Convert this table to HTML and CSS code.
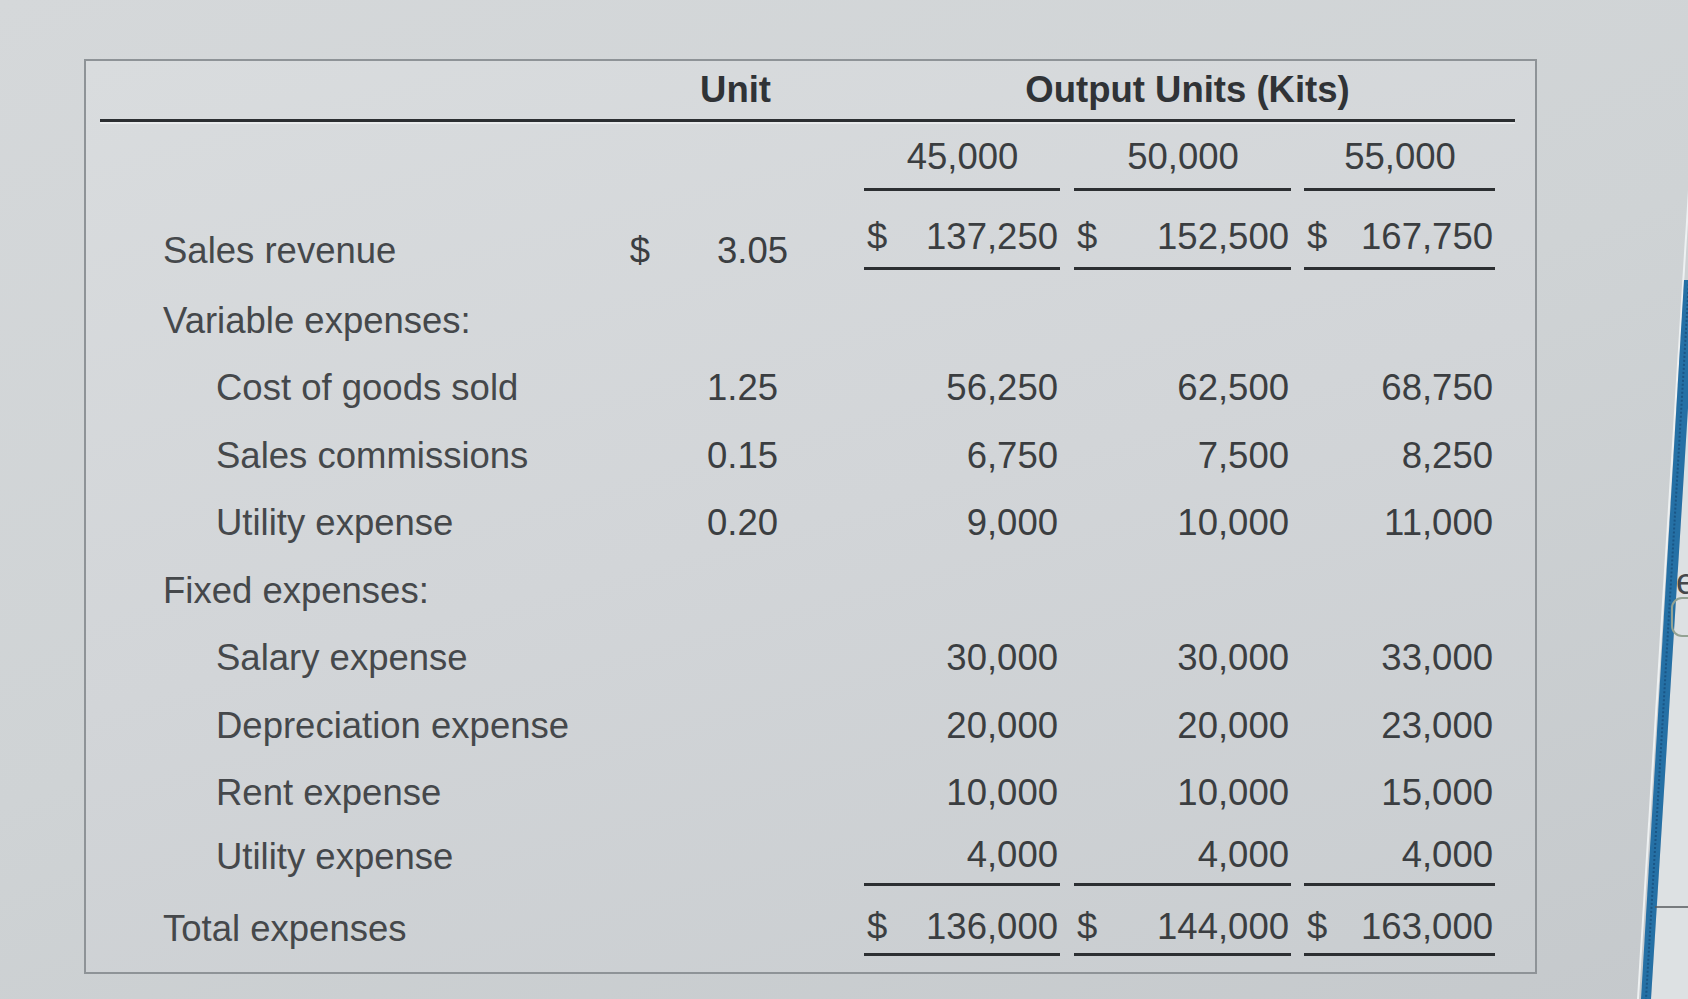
FILE: index.html
```html
<!DOCTYPE html>
<html lang="en">
<head>
<meta charset="utf-8">
<title>Flexible budget</title>
<link rel="stylesheet" href="styles.css">
</head>
<body>
  <section class="card">
    <div class="row head1">
      <div class="lbl"></div>
      <div class="uhead">Unit</div>
      <div class="ohead">Output Units (Kits)</div>
    </div>
    <div class="rule"></div>
    <div class="row head2">
      <div class="lbl"></div>
      <div class="cur"></div>
      <div class="unit"></div>
      <div class="val ul center">45,000</div>
      <div class="val v2 ul center">50,000</div>
      <div class="val v3 ul center">55,000</div>
    </div>
    <div class="row sales">
      <div class="lbl">Sales revenue</div>
      <div class="cur">$</div>
      <div class="unit first">3.05</div>
      <div class="val ul"><span>$</span><span class="num">137,250</span></div>
      <div class="val v2 ul"><span>$</span><span class="num">152,500</span></div>
      <div class="val v3 ul"><span>$</span><span class="num">167,750</span></div>
    </div>
    <div class="row">
      <div class="lbl">Variable expenses:</div>
    </div>
    <div class="row">
      <div class="lbl sub">Cost of goods sold</div>
      <div class="cur"></div>
      <div class="unit">1.25</div>
      <div class="val"><span class="num">56,250</span></div>
      <div class="val v2"><span class="num">62,500</span></div>
      <div class="val v3"><span class="num">68,750</span></div>
    </div>
    <div class="row">
      <div class="lbl sub">Sales commissions</div>
      <div class="cur"></div>
      <div class="unit">0.15</div>
      <div class="val"><span class="num">6,750</span></div>
      <div class="val v2"><span class="num">7,500</span></div>
      <div class="val v3"><span class="num">8,250</span></div>
    </div>
    <div class="row">
      <div class="lbl sub">Utility expense</div>
      <div class="cur"></div>
      <div class="unit">0.20</div>
      <div class="val"><span class="num">9,000</span></div>
      <div class="val v2"><span class="num">10,000</span></div>
      <div class="val v3"><span class="num">11,000</span></div>
    </div>
    <div class="row">
      <div class="lbl">Fixed expenses:</div>
    </div>
    <div class="row">
      <div class="lbl sub">Salary expense</div>
      <div class="cur"></div>
      <div class="unit"></div>
      <div class="val"><span class="num">30,000</span></div>
      <div class="val v2"><span class="num">30,000</span></div>
      <div class="val v3"><span class="num">33,000</span></div>
    </div>
    <div class="row">
      <div class="lbl sub">Depreciation expense</div>
      <div class="cur"></div>
      <div class="unit"></div>
      <div class="val"><span class="num">20,000</span></div>
      <div class="val v2"><span class="num">20,000</span></div>
      <div class="val v3"><span class="num">23,000</span></div>
    </div>
    <div class="row">
      <div class="lbl sub">Rent expense</div>
      <div class="cur"></div>
      <div class="unit"></div>
      <div class="val"><span class="num">10,000</span></div>
      <div class="val v2"><span class="num">10,000</span></div>
      <div class="val v3"><span class="num">15,000</span></div>
    </div>
    <div class="row last">
      <div class="lbl sub">Utility expense</div>
      <div class="cur"></div>
      <div class="unit"></div>
      <div class="val ul"><span class="num">4,000</span></div>
      <div class="val v2 ul"><span class="num">4,000</span></div>
      <div class="val v3 ul"><span class="num">4,000</span></div>
    </div>
    <div class="row total">
      <div class="lbl">Total expenses</div>
      <div class="cur"></div>
      <div class="unit"></div>
      <div class="val ul"><span>$</span><span class="num">136,000</span></div>
      <div class="val v2 ul"><span>$</span><span class="num">144,000</span></div>
      <div class="val v3 ul"><span>$</span><span class="num">163,000</span></div>
    </div>
  </section>

  <svg class="side" width="100" height="999" viewBox="0 0 100 999" aria-hidden="true">
    <polygon points="108,280 140,280 140,999 63,999" fill="#dde1e3"/>
    <line x1="101" y1="190" x2="50" y2="999" stroke="#eef1f2" stroke-width="2"/>
    <polygon points="96,280 108,280 63,999 53,999" fill="#2570a5"/>
    <line x1="101" y1="280" x2="58" y2="999" stroke="#1a5686" stroke-width="2" stroke-dasharray="2 2"/>
    <text x="88" y="594" class="side-e">e</text>
    <rect x="84" y="598" width="40" height="38" rx="10" fill="none" stroke="#93a293" stroke-width="2"/>
    <line x1="67" y1="907" x2="100" y2="907" stroke="#55595c" stroke-width="1.5"/>
  </svg>
</body>
</html>
```

FILE: styles.css
```css
html, body {
  margin: 0;
  padding: 0;
}

body {
  position: relative;
  width: 1688px;
  height: 999px;
  overflow: hidden;
  background: linear-gradient(160deg, #d5d8da 0%, #cfd3d5 50%, #c5c9cc 100%);
  font-family: "Liberation Sans", Arial, sans-serif;
  color: #3b3e41;
}

.card {
  box-sizing: border-box;
  width: 1453px;
  margin: 59px 0 0 84px;
  padding-bottom: 16px;
  border: 2px solid #8e9397;
  background: linear-gradient(165deg, #d9dcde 0%, #d2d5d8 50%, #c9cdd0 100%);
}

.row {
  display: flex;
  height: 67.5px;
  font-size: 36.5px;
  line-height: 1.15;
}

.row > div {
  display: flex;
  align-items: center;
  box-sizing: border-box;
}

.lbl {
  width: 534px;
  padding-left: 77px;
  color: #45484b;
}

.lbl.sub {
  padding-left: 130px;
}

.cur {
  width: 40px;
  justify-content: center;
}

.unit {
  width: 128px;
  justify-content: flex-end;
  padding-right: 10px;
}

.unit.first {
  padding-right: 0;
}

.val {
  width: 196px;
  margin-left: 76px;
  padding: 0 2px 0 3px;
}

.val.v2 {
  width: 217px;
  margin-left: 14px;
}

.val.v3 {
  width: 191px;
  margin-left: 13px;
}

.val .num {
  margin-left: auto;
}

.val.center {
  justify-content: center;
}

.val.ul {
  border-bottom: 3px solid #2c2f32;
}

/* header rows */
.head1 {
  height: 58px;
  font-weight: bold;
  color: #303336;
}

.uhead {
  width: 168px;
  justify-content: flex-end;
  padding-right: 17px;
}

.ohead {
  width: 631px;
  margin-left: 76px;
  justify-content: center;
  padding-left: 16px;
}

.rule {
  height: 3px;
  margin: 0 20px 0 14px;
  background: #2b2e31;
  box-shadow: 0 2px 0 rgba(255, 255, 255, 0.45);
}

.head2 {
  height: 69px;
}

.head2 .val {
  padding-top: 4px;
}

/* sales revenue */
.sales {
  height: 96px;
}

.sales .lbl,
.sales .cur,
.sales .unit {
  padding-top: 24px;
}

.sales .val {
  align-self: flex-start;
  height: 79px;
  padding-top: 16px;
}

.last {
  height: 59px;
}

.total {
  height: 70px;
}

.total .lbl,
.total .val {
  padding-top: 15px;
}

/* neighbouring window at the right edge */
.side {
  position: absolute;
  top: 0;
  right: 0;
}

.side-e {
  font-family: "Liberation Sans", Arial, sans-serif;
  font-size: 36px;
  fill: #45484b;
}
```
